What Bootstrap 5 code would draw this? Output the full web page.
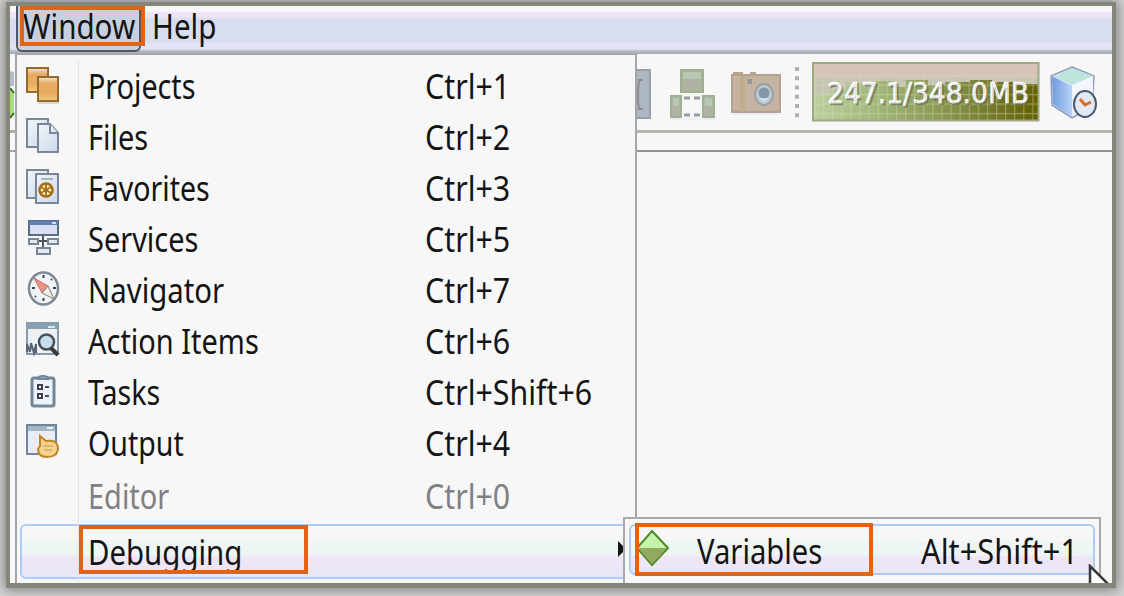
<!DOCTYPE html>
<html lang="en">
<head>
<meta charset="utf-8">
<meta name="viewport" content="width=device-width, initial-scale=1">
<title>Window menu</title>
<link href="https://cdn.jsdelivr.net/npm/bootstrap@5.3.0/dist/css/bootstrap.min.css" rel="stylesheet">
<style>
body{width:1124px;height:596px;overflow:hidden;background:#d4d6d4;font-family:"Noto Sans",sans-serif;font-size:35px;color:#141414;padding:2px 8px 8px 6px}
.app-frame{height:586px;border:4px solid #85867b;border-bottom-width:5px;background:#f7f7f7;box-shadow:0 0 12px 2px #7c807e;overflow:hidden}
.menu-bar{height:48px;padding-left:6px;background:linear-gradient(#f6f7fb 0 5px,#f0e4f4 7px 10px,#d8ddef 14px 35px,#e4e3f4 38px 43px,#b4bac6 45px,#a5a8b0)}
.menu-title{height:46px;width:125px;background:#c8d0df;border:2px solid #55575f;border-top:0;border-radius:0 0 6px 6px;padding-left:5px}
.txt{display:block;white-space:nowrap;line-height:54px;transform-origin:0 50%;transform:scaleX(.827)}
.keys{transform:scaleX(.867)}
.menu-title .txt,.menu-help .txt{line-height:40px;transform:scaleX(.845)}
.menu-help{margin-left:11px}
.mark-box{border:4px solid #e06414;position:absolute;z-index:5}
.tool-bar{height:79px;border-bottom:3px solid #b5b5ae;padding-left:626px}
.tab-strip{height:19px;border-bottom:2px solid #929298}
.drop{position:absolute;z-index:2;left:5px;top:48px;width:622px;height:529px;background:#f7f7f7;border:2px solid #a5a5a8;border-top-width:1px;border-bottom:0;padding-top:4px}
.drop::before{content:"";position:absolute;left:61px;top:5px;bottom:0;border-left:1px solid #e2e3e8}
.entry{height:51px;display:grid;grid-template-columns:71px 337px 1fr}
.entry svg{margin:8px 0 0 7px;width:38px;height:38px}
.entry.off{color:#808084;position:relative;top:2px}
.hot{height:55px;margin:6px -9px 0 3px;grid-template-columns:66px 1fr auto;border:2px solid #b0c9f8;border-radius:6px;background:linear-gradient(#f7f7f7 0 15px,#edf6f5 16px 29px,#eee5f6 31px 42px,#e8e7f7 44px)}
.hot .txt{line-height:52px}
.fly{position:absolute;z-index:3;left:613px;top:511px;width:478px;height:70px;background:#f7f7f7;border:2px solid #a9a9a9;padding:5px 4px}
.fly .hot{margin:0;height:51px;position:relative;display:flex}
.fly .hot .txt{line-height:50px;flex:none}
.clip{height:44px;overflow:hidden}
</style>
</head>
<body>
<main class="app-frame position-relative">
  <nav class="menu-bar d-flex">
    <div class="menu-title"><span class="txt">Window</span></div>
    <div class="menu-help"><span class="txt">Help</span></div>
  </nav>
  <div class="mark-box" style="left:10px;top:0;width:125px;height:40px"></div>

  <div class="tool-bar d-flex align-items-start">
    <svg width="176" height="76" viewBox="636 54 176 76">
      <path d="M630 70h20v48h-20z" fill="#adb8c4" stroke="#9a9eaa" stroke-width="2"/><path d="M643 80h-4q-2 18 0 29h4" fill="none" stroke="#8e8b8c" stroke-width="2"/>
      <g fill="#b0b3a1" stroke="#a0ae91" stroke-width="2"><path d="M681 70h22v22h-22zM671 96h10v21h-10zM703 96h11v21h-11z"/></g>
      <path d="M683 72h18v7h-18zM673 98h6v8h-6zM705 98h7v8h-7z" fill="#b8c6b4"/>
      <path d="M684 98h6m4 0h6m-16 17h6m4 0h6" stroke="#999aa5" stroke-width="3"/>
      <path d="M733 72h10v3h-10zM750 72h6v3h-6z" fill="#b2a68b"/><path d="M732 75h48v37h-48z" fill="#c5b3a1" stroke="#b8a090" stroke-width="2"/><path d="M740 76h5v36h-5z" fill="#bfad8b"/><path d="M747 79h5v5h-4z" fill="#909894"/>
      <ellipse cx="764" cy="94.500" rx="9" ry="10.500" fill="#bdc9d4" stroke="#989f9d" stroke-width="2"/><circle cx="764" cy="93" r="5.500" fill="#8296a7"/><path d="M759 98q5 7 10 0z" fill="#d0ddeb"/>
      <path d="M732 114h49M671 119h43" stroke="#dfe5f5"/>
      <path d="M797 67v52" stroke="#aeb1b5" stroke-width="4" stroke-dasharray="4 5.250"/>
    </svg>
    <svg width="228" height="76" viewBox="812 54 228 76">
      <defs>
        <linearGradient id="heapBack" x1="0" y1="0" x2="0" y2="1"><stop stop-color="#d9c5bb"/><stop offset=".2" stop-color="#d5c4b8"/><stop offset=".32" stop-color="#c8c5b5"/><stop offset="1" stop-color="#bfc9a7"/></linearGradient>
        <linearGradient id="heapUse"><stop stop-color="#bcd0a0"/><stop offset=".3" stop-color="#a0b578"/><stop offset=".55" stop-color="#8b9a54"/><stop offset=".8" stop-color="#74792a"/><stop offset="1" stop-color="#626000"/></linearGradient>
        <pattern id="cells" width="9.100" height="9.500" patternUnits="userSpaceOnUse" x="814" y="75"><path d="M0 .5h9.100M.5 0v9.500" stroke="#e0deb8" stroke-opacity=".42" stroke-width="1.200"/></pattern>
      </defs>
      <path d="M812.500 63h226v58h-226z" fill="url(#heapBack)"/>
      <path d="M813 95h17v-5h16v-7h18v4h9v-6h22v6h10v-7h23v5h17v-3h25v-2h22v2h22v2h24v37H813z" fill="url(#heapUse)"/>
      <path d="M813 75h225v46H813z" fill="url(#cells)"/>
      <path d="M813 63h225.500v57.500H813z" fill="none" stroke="#9ba985" stroke-width="2"/>
      <text x="827" y="102.500" font-family="DejaVu Sans" font-size="28.500" fill="#fff" stroke="#fff" stroke-width=".5" textLength="202" lengthAdjust="spacingAndGlyphs" style="text-shadow:2px 2px 0 #62665399">247.1/348.0MB</text>
    </svg>
    <svg width="68" height="76" viewBox="1040 54 68 76">
      <defs><linearGradient id="side" x2="1"><stop stop-color="#709bdd"/><stop offset="1" stop-color="#b8d4fa"/></linearGradient></defs>
      <path d="M1072 67l22 9-2 31-20 11-20-13-1-29z" fill="#e6edfa" stroke="#8d9abb" stroke-width="1.500"/>
      <path d="M1052 76l20 10v31l-19-13z" fill="url(#side)"/><path d="M1072 68l21 8-21 9-19-9z" fill="#bee5dc"/><path d="M1072 86l21-10v18l-19 20z" fill="#f4f5ff"/>
      <ellipse cx="1085" cy="104" rx="11" ry="13" fill="#e1eaf4" stroke="#4b5970" stroke-width="2"/><path d="M1080 99l5 6 6-3" fill="none" stroke="#dc6c22" stroke-width="3"/>
    </svg>
  </div>
  <div class="tab-strip"></div>
  <svg class="position-absolute" style="left:0;top:48px" width="5" height="105" viewBox="10 54 5 105"><path d="M10 71l4 1v14h-4z" fill="#b6bdc8"/><path d="M10 88q3 1 4 5v21l-4 4z" fill="#a6df78"/><path d="M10 88l4 5m0 20l-4 5" stroke="#267219" stroke-width="2"/><path d="M10 131h4m-4 20h4" stroke="#aaa" stroke-width="2"/></svg>

  <section class="drop">
    <div class="entry"><svg viewBox="24 67 38 38"><defs><linearGradient id="folder" x2="0" y2="1"><stop stop-color="#eee9e2"/><stop offset=".25" stop-color="#e8ab62"/><stop offset=".7" stop-color="#e9ad60"/><stop offset="1" stop-color="#f1ca7c"/></linearGradient></defs><g fill="url(#folder)" stroke="#946a2d" stroke-width="2"><path d="M27 68h21v24H27z"/><path d="M38 77h20v24H38z"/></g><path d="M38 103h21" stroke="#bbb"/></svg><span class="txt" style="transform:scaleX(.82)">Projects</span><span class="txt keys">Ctrl+1</span></div>
    <div class="entry"><svg viewBox="24 118 38 38"><defs><linearGradient id="paper" x2="1" y2="1"><stop stop-color="#f1f5f9"/><stop offset="1" stop-color="#cdd9ea"/></linearGradient></defs><g fill="url(#paper)" stroke="#798799" stroke-width="2"><path d="M27 119h21v28H27z"/><path d="M38 124h12l8 9v19H38z"/><path d="M50 124v9h8"/></g></svg><span class="txt">Files</span><span class="txt keys">Ctrl+2</span></div>
    <div class="entry"><svg viewBox="24 169 38 38"><g fill="url(#paper)" stroke="#798799" stroke-width="2"><path d="M27 170h21v28H27z"/><path d="M36 174h22v29H36z"/></g><path d="M41 179h12" stroke="#aab4bf" stroke-width="2"/><circle cx="46" cy="190" r="6.500" fill="#fff1c4" stroke="#a36b12" stroke-width="2.500"/><path d="M46 184v12m-5-9l10 6m0-6l-10 6" stroke="#a36b12" stroke-width="1.800"/></svg><span class="txt" style="transform:scaleX(.815)">Favorites</span><span class="txt keys">Ctrl+3</span></div>
    <div class="entry"><svg viewBox="24 220 38 38"><path d="M29 221h29v14H29z" fill="#d9e0f3" stroke="#5b6d81" stroke-width="2"/><path d="M29 221h29v4H29z" fill="#5e80b5"/><path d="M52 223h4" stroke="#d0e2f8" stroke-width="2"/><path d="M43 235v14M36 241h16" stroke="#50565f" stroke-width="2"/><g fill="#e3e9ed" stroke="#758798" stroke-width="2"><path d="M29 239h9v5h-9zM48 239h10v5H48zM37 248h13v6H37z"/></g></svg><span class="txt">Services</span><span class="txt keys">Ctrl+5</span></div>
    <div class="entry"><svg viewBox="24 271 38 38"><ellipse cx="43.500" cy="288.500" rx="14.500" ry="16" fill="#f0f4f7" stroke="#7d8995" stroke-width="2.500"/><g stroke="#3e454e" stroke-width="2"><path d="M43.500 275v3m0 20v3M32 288h3m18 0h3M35 279l1 1m15 16l1 1M35 297l1-1m15-16l1-1"/></g><path d="M34 278l14 8-6 7z" fill="#ec9187" stroke="#d27164"/><path d="M48 286l6 13-12-6z" fill="#f1eeeb" stroke="#827c78"/></svg><span class="txt" style="transform:scaleX(.838)">Navigator</span><span class="txt keys">Ctrl+7</span></div>
    <div class="entry"><svg viewBox="24 322 38 38"><path d="M27 323h31v31H27z" fill="#eef0f4" stroke="#869bab" stroke-width="2"/><path d="M27 323h31v6H27z" fill="#87a1b2"/><path d="M48 327h7" stroke="#ddeaf1" stroke-width="2"/><path d="M27 352v-8l3 8 1-9 3 10 2-9v9" fill="none" stroke="#596472" stroke-width="2"/><circle cx="46.500" cy="342" r="7.500" fill="#c8ddec" stroke="#454e59" stroke-width="2.500"/><path d="M51 348l7 7" stroke="#333b43" stroke-width="4"/></svg><span class="txt">Action Items</span><span class="txt keys">Ctrl+6</span></div>
    <div class="entry"><svg viewBox="24 373 38 38"><rect x="32" y="378" width="22" height="28" rx="2" fill="#edf1fa" stroke="#718697" stroke-width="3"/><path d="M38 379q0-3 5-3t5 3z" fill="#9aafbe" stroke="#718697" stroke-width="2"/><path d="M38 385h4v4h-4zm0 9h4v4h-4z" fill="#fff" stroke="#3d4046" stroke-width="2"/><path d="M45 387h4m-4 9h4" stroke="#444b57" stroke-width="2"/></svg><span class="txt" style="transform:scaleX(.815)">Tasks</span><span class="txt keys">Ctrl+Shift+6</span></div>
    <div class="entry"><svg viewBox="24 424 38 38"><path d="M27 425h29v29H27z" fill="#e9ebf5" stroke="#70869a" stroke-width="2"/><path d="M28 426h27v5H28z" fill="#a3b8c3"/><path d="M47 428h6" stroke="#edf4f7" stroke-width="2"/><path d="M40 436l6 5q12-2 12 8-1 8-11 8-9 0-9-8l2-3z" fill="#f3d28d" stroke="#c28322" stroke-width="2"/><path d="M43 446h10m-9 4h8" stroke="#c99448"/></svg><span class="txt" style="transform:scaleX(.815)">Output</span><span class="txt keys">Ctrl+4</span></div>
    <div class="entry off"><i></i><span class="txt">Editor</span><span class="txt keys">Ctrl+0</span></div>
    <div class="entry hot"><i></i><div class="clip"><span class="txt" style="transform:scaleX(.84)">Debugging</span></div></div>
    <svg class="position-absolute" style="left:601px;top:486px" width="8" height="17"><path d="M0 0l8 8-8 8z" fill="#141414"/></svg>
  </section>
  <div class="mark-box" style="left:69px;top:519px;width:229px;height:49px"></div>

  <section class="fly">
    <div class="hot">
      <svg class="position-absolute" style="left:4px;top:3px;z-index:6" width="34" height="38"><path d="M17 2L33 19 17 36 2 19z" fill="#c5f3aa" stroke="#4d8c29" stroke-width="2"/><path d="M3 19h29L17 35z" fill="#93a860"/></svg>
      <span class="txt" style="margin-left:66px;width:224px;transform:scaleX(.835)">Variables</span><span class="txt" style="transform:scaleX(.879)">Alt+Shift+1</span>
    </div>
  </section>
  <div class="mark-box" style="left:625px;top:517px;width:238px;height:53px"></div>
  <svg class="position-absolute" style="left:1078px;top:558px;z-index:6" width="24" height="20"><path d="M2 0v20h18z" fill="#fff"/><path d="M2 20V2l18 18" fill="none" stroke="#34373e" stroke-width="2.500"/></svg>
</main>
<script src="https://cdn.jsdelivr.net/npm/bootstrap@5.3.0/dist/js/bootstrap.bundle.min.js"></script>
</body>
</html>
